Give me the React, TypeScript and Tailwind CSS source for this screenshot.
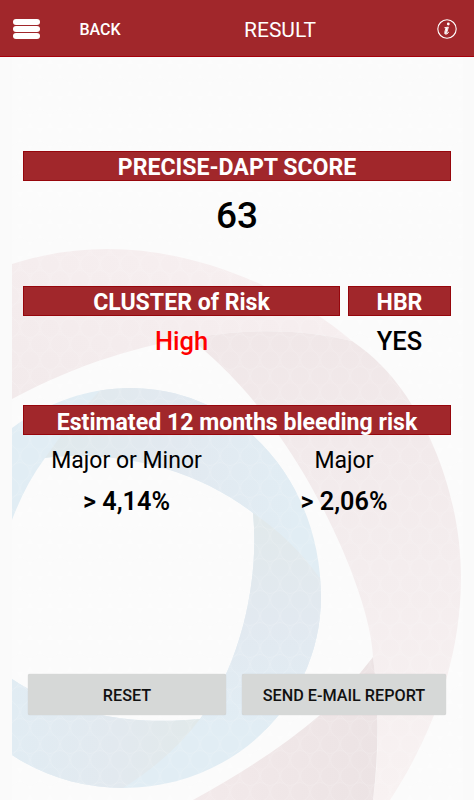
type BarProps = {
  label: string;
  className?: string;
};

type RiskProps = {
  label: string;
  value: string;
  className?: string;
};

function Bar({ label, className = "pt-[3px]" }: BarProps) {
  return (
    <h2
      className={`flex h-[30px] items-center justify-center border border-[#96060c] bg-[#a1272b] text-[23.1px] leading-[30px] font-bold whitespace-nowrap text-white ${className}`}
    >
      {label}
    </h2>
  );
}

function Risk({ label, value, className = "" }: RiskProps) {
  return (
    <div className={`flex flex-col items-center text-black ${className}`}>
      <span className="text-[23px] leading-[30px]">{label}</span>
      <span className="mt-[11px] text-[25.2px] leading-[30px] font-semibold">
        {value}
      </span>
    </div>
  );
}

function Backdrop() {
  return (
    <svg
      className="absolute inset-0 h-[800px] w-[474px]"
      viewBox="0 0 474 800"
      aria-hidden="true"
    >
      <defs>
        <pattern id="dots" width="20" height="32" patternUnits="userSpaceOnUse">
          <g fill="#000" fillOpacity="0.004" stroke="#fff" strokeOpacity="0.14">
            <circle cx="10" cy="8" r="9.5" />
            <circle cx="0" cy="24" r="9.5" />
            <circle cx="20" cy="24" r="9.5" />
          </g>
        </pattern>
        <linearGradient id="pinkTop" x1="0" y1="1" x2="1" y2="0">
          <stop offset="0" stopColor="#f3ebec" />
          <stop offset="1" stopColor="#f9f1f2" />
        </linearGradient>
        <linearGradient id="pinkRight" x1="0" y1="0" x2="0" y2="1">
          <stop offset="0" stopColor="#f1e8e9" />
          <stop offset="0.5" stopColor="#f5eeef" />
          <stop offset="1" stopColor="#f9f3f3" />
        </linearGradient>
        <linearGradient id="pinkBottom" x1="0" y1="0" x2="1" y2="0">
          <stop offset="0" stopColor="#f4ebec" />
          <stop offset="1" stopColor="#ede4e5" />
        </linearGradient>
        <linearGradient id="blueRight" x1="0" y1="0" x2="0" y2="1">
          <stop offset="0" stopColor="#e2eaec" />
          <stop offset="0.5" stopColor="#e3eaf1" />
          <stop offset="1" stopColor="#e2eef5" />
        </linearGradient>
        <linearGradient id="blueBottom" x1="0" y1="0" x2="1" y2="0">
          <stop offset="0" stopColor="#e2edf4" />
          <stop offset="0.55" stopColor="#e3eaf0" />
          <stop offset="1" stopColor="#e2eaeb" />
        </linearGradient>
        <linearGradient id="blueTop" x1="0" y1="0" x2="1" y2="0">
          <stop offset="0" stopColor="#e1eaed" />
          <stop offset="0.5" stopColor="#e3eaf1" />
          <stop offset="1" stopColor="#e2eef5" />
        </linearGradient>
        <clipPath id="ring">
          <path d="M12 428C47 402 90 388 130 388C240 388 321 482 321 597C321 700 236 788 123 788C84 788 45 777 12 755V679C62 713 128 726 200 719C238 669 260 586 253 513C192 466 112 450 45 458Q25 485 12 520Z" />
        </clipPath>
      </defs>
      <rect x="12" y="57" width="451" height="743" fill="#fcfcfc" />

      {/* outer swirl */}
      <path
        d="M12 264C100 236 184 250 260 284C296 300 328 320 352 341C302 329 252 329 203 336C140 345 80 363 12 399Z"
        fill="url(#pinkTop)"
      />
      <path
        d="M203 336C252 329 302 329 352 341C374 356 390 373 402 390C438 440 461 510 461 577C461 665 428 742 390 800H373C380 750 379 702 373 657C371 606 330 508 280 437C258 403 231 373 198 345Z"
        fill="url(#pinkRight)"
      />
      <path
        d="M373 657Q350 687 320 715Q270 758 193 800H373Q382 726 373 657Z"
        fill="url(#pinkBottom)"
      />

      {/* inner swirl */}
      <g clipPath="url(#ring)">
        <rect x="12" y="380" width="320" height="420" fill="#e2eef5" />
        <path
          d="M45 458Q70 421 110 380H200L300 470L290 540L253 513C192 466 112 450 45 458Z"
          fill="url(#blueTop)"
        />
        <path
          d="M253 513Q291 538 319 577H330V730H190L240 600Z"
          fill="url(#blueRight)"
        />
        <path d="M12 670L200 719Q171 758 123 788V800H12Z" fill="url(#blueBottom)" />
      </g>
      <rect x="12" y="57" width="451" height="743" fill="url(#dots)" />
    </svg>
  );
}

export default function App() {
  return (
    <div className="relative h-[800px] w-[474px] overflow-hidden bg-[#fafafa] font-[Roboto,sans-serif]">
      <Backdrop />
      <div className="relative flex h-full flex-col">
        <header className="flex h-[57px] items-center border-b border-[#a6000b] bg-[#a1272b] text-white">
          <button className="mt-[2px] ml-[13px] flex w-[27px] flex-col gap-px" aria-label="Menu">
            <span className="h-[6px] w-full rounded-[3px] bg-white" />
            <span className="h-[6px] w-full rounded-[3px] bg-white" />
            <span className="h-[6px] w-full rounded-[3px] bg-white" />
          </button>
          <button className="ml-[39px] w-[42px] pt-[4px] text-[16px] font-medium">
            BACK
          </button>
          <h1 className="ml-[123px] w-[72px] pt-[6px] text-[21px] whitespace-nowrap">
            RESULT
          </h1>
          <button className="mt-[2px] ml-[121px]" aria-label="Info">
            <svg className="size-5" viewBox="0 0 20 20" fill="none">
              <circle cx="10" cy="10" r="9.2" stroke="#fff" strokeWidth="1.1" />
              <circle cx="11.3" cy="5" r="1.4" fill="#fff" />
              <path
                d="M7.4 8.7 11.4 8.1 9.6 14.1Q9.5 14.8 10.1 14.5L11.5 13.2M9 8.6 7.7 13.5Q7.4 15.4 9 15.2 10.4 15 11.7 13.3"
                stroke="#fff"
                strokeWidth="0.9"
              />
              <path d="M9 8.7 11.1 8.2 9.2 14.8H7.8Z" fill="#fff" />
            </svg>
          </button>
        </header>

        <main className="flex flex-1 flex-col px-[23px] pt-[94px]">
          <Bar label="PRECISE-DAPT SCORE" />
          <p className="mt-[14px] text-center text-[37px] leading-[42px] font-medium text-black">
            63
          </p>

          <section className="mt-[49px] grid grid-cols-[317px_103px] gap-x-2 text-center text-[25.5px] leading-[30px] font-medium">
            <Bar label="CLUSTER of Risk" />
            <Bar label="HBR" />
            <span className="mt-[10px] text-[#ff0000]">High</span>
            <span className="mt-[10px] text-black">YES</span>
          </section>

          <section className="mt-[49px]">
            <Bar label="Estimated 12 months bleeding risk" className="pt-[5px]" />
            <div className="mt-[11px] flex">
              <Risk label="Major or Minor" value="> 4,14%" className="w-[207px]" />
              <Risk label="Major" value="> 2,06%" className="ml-[7px] flex-1" />
            </div>
          </section>

          <div className="mt-[157px] flex gap-4 pl-[5px] text-[16.2px] text-[#111]">
            <button className="h-[41px] w-[198px] rounded-[2px] bg-[#d6d8d7] pt-[4px] font-medium shadow-[0_0_1px_#bbb]">
              RESET
            </button>
            <button className="h-[41px] w-[204px] rounded-[2px] bg-[#d6d8d7] pt-[4px] font-medium whitespace-nowrap shadow-[0_0_1px_#bbb]">
              SEND E-MAIL REPORT
            </button>
          </div>
        </main>
      </div>
    </div>
  );
}
